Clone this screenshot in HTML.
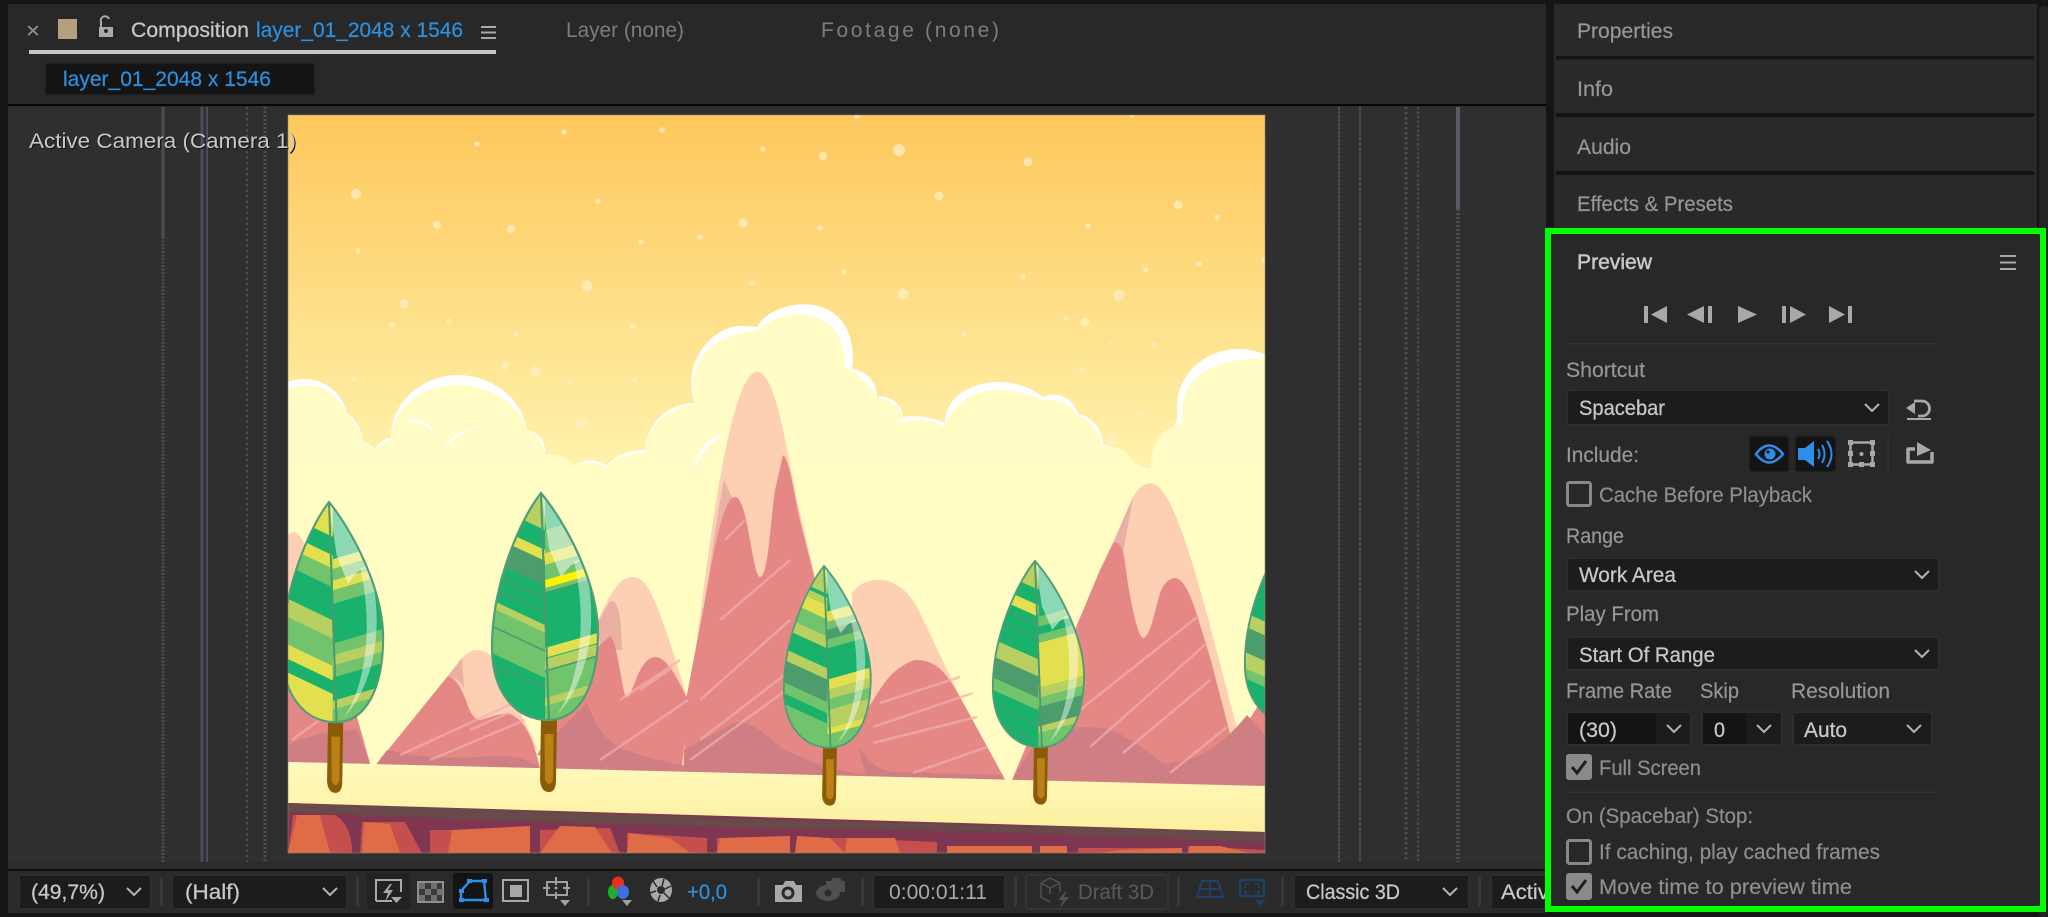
<!DOCTYPE html>
<html><head><meta charset="utf-8"><title>Composition</title>
<style>
html,body{margin:0;padding:0;background:#151515;width:2048px;height:917px;overflow:hidden}
svg{display:block}
text{font-family:"Liberation Sans",sans-serif;font-size:21px}
.g{fill:#969696;stroke:#969696;stroke-width:.2}.l{fill:#c8c8c8;stroke:#c8c8c8;stroke-width:.25}.b{fill:#2b90e0;stroke:#2b90e0;stroke-width:.2}.d{fill:#8e8e8e;stroke:#8e8e8e;stroke-width:.2}.f{fill:#5a5a5a}
.dd{fill:#1c1c1c;stroke:#2d2d2d;stroke-width:2}
.ch{fill:none;stroke:#b4b4b4;stroke-width:2}
.sep{fill:#373737}
.gd{stroke:#4d4c56;fill:none}
.tb{fill:#a8a8a8}
.cb{fill:none;stroke:#888;stroke-width:3}
.cf{fill:#8a8a8a}
.ck{fill:none;stroke:#1f1f1f;stroke-width:3}
.st{stroke:#f2aeac;stroke-width:2.5;fill:none}
.hl{stroke:#4a9a72;stroke-width:1.6;fill:none}
</style></head>
<body>
<svg width="2048" height="917" viewBox="0 0 2048 917" xmlns="http://www.w3.org/2000/svg">
<defs>
<linearGradient id="sky" x1="0" y1="115" x2="0" y2="470" gradientUnits="userSpaceOnUse"><stop offset="0" stop-color="#fdc75c"/><stop offset=".55" stop-color="#fedf88"/><stop offset="1" stop-color="#fff3ad"/></linearGradient>
<linearGradient id="gr" x1="0" y1="765" x2="0" y2="830" gradientUnits="userSpaceOnUse"><stop offset="0" stop-color="#fef9bc"/><stop offset="1" stop-color="#fdf09f"/></linearGradient>
<clipPath id="img"><rect x="288" y="115" width="977" height="738"/></clipPath>
<clipPath id="leaf"><path d="M0,0C-20,25-49,90-49,154C-49,200-25,227 7,227C40,227 57,190 57,140C57,90 25,30 0,0Z"/></clipPath>
<clipPath id="act"><rect x="1490" y="874" width="55" height="35"/></clipPath>
<g id="tr"><path d="M0,0H16L15,60Q15,72 8,72Q0,72-1,60Z" fill="#8a5c08"/><path d="M3.500,14H12.500L12,60Q8,68 4,60Z" fill="#bd8016"/></g>
<g id="hi"><path d="M0,0C15,15 30,40 41,68L30,72L20,84L8,55Z" fill="#fff" opacity=".5"/><path d="M33,68L42,66C56,110 55,180 16,222C38,190 47,130 33,68Z" fill="#fff" opacity=".45"/><path d="M0,0C-20,25-49,90-49,154C-49,200-25,227 7,227C40,227 57,190 57,140C57,90 25,30 0,0Z" fill="none" stroke="#4f9e78" stroke-width="2.2"/><path d="M0,0L8,227" stroke="#4a9a72" stroke-width="2.2"/></g>
</defs>

<!-- Frame -->
<rect width="2048" height="917" fill="#151515"/>
<rect x="8" y="4" width="1538" height="100" fill="#282828"/>
<rect x="8" y="104" width="1538" height="2" fill="#060606"/>
<rect x="8" y="106" width="1538" height="756" fill="#2f2f2f"/>
<rect x="8" y="862" width="1538" height="7" fill="#2c2c2c"/>
<rect x="8" y="869" width="1538" height="2" fill="#0e0e0e"/>
<rect x="8" y="871" width="1538" height="42" fill="#2a2a2a"/>

<!-- Tabs -->
<text x="26" y="38" class="d" textLength="14" lengthAdjust="spacingAndGlyphs" style="font-size:22px">×</text>
<rect x="58" y="19" width="19" height="20" fill="#b2a07e"/>
<path d="M99,27h14v10h-14z" fill="#aaa"/><path d="M101,27v-5a4,4 0 0 1 8,-3" fill="none" stroke="#aaa" stroke-width="2"/><circle cx="106" cy="31" r="2" fill="#282828"/>
<text x="131" y="37" class="l" textLength="118" lengthAdjust="spacingAndGlyphs">Composition</text>
<text x="256" y="37" class="b" textLength="207" lengthAdjust="spacingAndGlyphs">layer_01_2048 x 1546</text>
<path d="M481,27h15M481,32.5h15M481,38h15" stroke="#aaa" stroke-width="2"/>
<rect x="29" y="50" width="467" height="4" fill="#c5c5c5"/>
<text x="566" y="37" fill="#7c7c7c" textLength="118" lengthAdjust="spacingAndGlyphs">Layer (none)</text>
<text x="821" y="37" fill="#7c7c7c" textLength="178" lengthAdjust="spacing">Footage (none)</text>
<rect x="45.5" y="63" width="269" height="32" rx="2" fill="#141414" stroke="#222" stroke-width="1.5"/>
<text x="63" y="86" class="b" textLength="208" lengthAdjust="spacingAndGlyphs">layer_01_2048 x 1546</text>

<!-- Guides -->
<path class="gd" stroke-width="3" d="M163,107V237"/><path class="gd" stroke-width="3" stroke-dasharray="2 1.5" d="M163,237V862"/>
<path class="gd" stroke-width="3" d="M202,107V862"/><path class="gd" stroke-width="2" d="M207,107V862"/>
<path class="gd" stroke-width="2" stroke-dasharray="2.5 3" d="M247,107V862"/><path class="gd" stroke-width="3" stroke-dasharray="2 2" d="M265,107V862"/>
<path class="gd" stroke-width="2" stroke-dasharray="3 1" d="M1339,107V862"/><path class="gd" stroke-width="2" stroke-dasharray="4 1" d="M1360,107V862"/>
<path class="gd" stroke-width="3" stroke-dasharray="2.5 2.5" d="M1406,107V862"/><path class="gd" stroke-width="2" stroke-dasharray="2.5 2" d="M1418,107V862"/>
<path stroke="#5c5a65" stroke-width="4" d="M1458,107V209"/><path class="gd" stroke-width="4" stroke-dasharray="2 2" d="M1458,209V862"/>

<!-- Illustration -->
<g clip-path="url(#img)">
<rect x="288" y="115" width="977" height="738" fill="url(#sky)"/>
<g fill="#fff0c4" opacity=".75">
<circle cx="477" cy="144" r="2.8"/><circle cx="564" cy="132" r="2.8"/><circle cx="662" cy="130" r="2.8"/><circle cx="763" cy="149" r="2.8"/><circle cx="356" cy="194" r="5"/><circle cx="598" cy="201" r="2.8"/><circle cx="437" cy="225" r="4"/><circle cx="511" cy="229" r="4"/><circle cx="641" cy="242" r="2.8"/><circle cx="700" cy="237" r="2.8"/><circle cx="743" cy="223" r="4.5"/><circle cx="358" cy="251" r="2.8"/><circle cx="587" cy="286" r="5.5"/><circle cx="752" cy="283" r="2.8"/><circle cx="404" cy="304" r="5"/><circle cx="449" cy="321" r="2.8"/><circle cx="392" cy="325" r="2.8"/><circle cx="516" cy="334" r="2.8"/><circle cx="633" cy="326" r="2.8"/><circle cx="505" cy="366" r="4"/><circle cx="535" cy="371" r="5"/><circle cx="354" cy="379" r="2.8"/><circle cx="570" cy="382" r="2.8"/><circle cx="635" cy="380" r="2.8"/><circle cx="581" cy="423" r="5.5"/>
<circle cx="857" cy="116" r="2.8"/><circle cx="1132" cy="115" r="2.8"/><circle cx="823" cy="156" r="4"/><circle cx="899" cy="150" r="6"/><circle cx="1028" cy="162" r="4.5"/><circle cx="939" cy="196" r="4.5"/><circle cx="1178" cy="205" r="4.5"/><circle cx="1217" cy="217" r="2.8"/><circle cx="1088" cy="226" r="2.8"/><circle cx="820" cy="228" r="2.8"/><circle cx="844" cy="272" r="2.8"/><circle cx="1023" cy="277" r="2.8"/><circle cx="1146" cy="270" r="2.8"/><circle cx="1199" cy="264" r="2.8"/><circle cx="1264" cy="260" r="2.8"/><circle cx="903" cy="294" r="5.5"/><circle cx="1119" cy="295" r="5.5"/><circle cx="1066" cy="318" r="2.8"/><circle cx="1085" cy="322" r="4.5"/><circle cx="964" cy="334" r="2.8"/><circle cx="1111" cy="343" r="2"/><circle cx="1154" cy="345" r="2.8"/><circle cx="1082" cy="370" r="2.8"/><circle cx="1139" cy="415" r="2.8"/><circle cx="1112" cy="439" r="5.5"/>
</g>
<!-- clouds -->
<path fill="#fff" d="M288,382A44,44 0 0 1 347,413A40,40 0 0 1 363,440L375,449A25,25 0 0 1 391,437C391,400 425,375 457,375C492,375 522,398 527,430A22,22 0 0 1 545,455A32,32 0 0 1 573,467A20,14 0 0 1 606,466A50,50 0 0 1 645,450A50,50 0 0 1 695,403C680,360 715,326 740,326Q750,326 757,327C772,298 855,285 853,362L852,369A28,28 0 0 1 877,397A22,22 0 0 1 903,417Q925,414 945,423C945,395 975,382 997,382S1030,388 1043,397A25,25 0 0 1 1078,414A30,32 0 0 1 1103,445A38,30 0 0 1 1133,465Q1140,465 1150,470L1177,420V407C1177,370 1210,349 1237,349Q1255,349 1265,355V600H288Z"/>
<path fill="#fffcc6" d="M288,389Q325,375 347,413L345,415Q355,418 363,440L375,451Q383,440 391,440C393,405 425,385 457,385C490,385 520,405 527,430Q540,435 545,455Q565,452 573,467Q590,458 606,468Q620,453 645,453Q650,412 695,404C685,360 715,333 757,331C780,308 845,300 845,368L850,370Q865,378 877,398Q895,400 903,417L895,424Q925,415 945,427C950,405 975,390 997,390C1015,390 1030,395 1043,400Q1070,400 1078,416Q1095,420 1103,447Q1128,445 1133,463Q1142,465 1150,474Q1150,430 1182,424Q1175,360 1265,358V600H288Z"/>
<path fill="#fff" d="M404,422Q425,412 437,438Q425,420 404,422ZM443,452Q450,430 480,429Q455,432 443,452ZM693,470Q698,440 728,432Q705,445 693,470ZM780,365Q790,360 795,360Q785,362 780,365Z"/>
<rect x="288" y="470" width="977" height="320" fill="#fffcc4"/>
<!-- mountains -->
<path fill="#fdd0b4" d="M288,535Q297,525 306,548L322,620L300,700L288,700Z"/>
<path fill="#e58885" d="M288,680L345,700L357,717L370,763L288,762Z"/>
<path fill="#cf7f83" d="M288,745Q320,730 357,730L370,764L288,762Z"/>
<path fill="#fdd0b4" d="M447,677L462,658C470,648 490,640 505,680L538,750L447,720Z"/>
<path fill="#e9b0a3" d="M447,677L462,658L464,688C460,680 452,676 447,677Z"/>
<path fill="#e58885" d="M375,766L447,677C455,675 462,690 466,700C470,715 476,720 480,720C490,718 500,712 510,714C525,720 533,738 540,768Z"/>
<path fill="#cf7f83" d="M375,766L387,750Q430,760 480,757Q520,752 540,768Z"/>
<path fill="#fdd0b4" d="M590,640C610,590 620,577 633,577C650,577 660,610 688,700L688,770L600,770Z"/>
<path fill="#e9b0a3" d="M598,622L610,601C620,600 621,620 622,650L600,650Z"/>
<path fill="#e58885" d="M537,755L600,645L610,636C618,640 622,697 627,697C633,697 638,658 655,657C668,657 678,680 688,700L684,772Z"/>
<path fill="#cf7f83" d="M540,770L545,745L587,703Q600,740 625,750Q655,760 682,765L684,772Z"/>
<path fill="#fdd0b4" d="M852,593C865,575 900,570 920,613L952,680L980,740L872,772L850,700Z"/>
<path fill="#e58885" d="M840,775L860,720L872,702C880,690 890,668 915,660C935,660 945,670 960,697L1007,783Z"/>
<path fill="#cf7f83" d="M855,740Q870,770 895,772L1000,775L1007,783L860,780Z"/>
<path fill="#fdd0b4" d="M682,765C700,620 725,372 757,372C775,372 785,440 797,500L830,640L830,772Z"/>
<path fill="#e9b0a3" d="M686,720C700,650 715,520 724,480L732,497L700,700Z"/>
<path fill="#e58885" d="M684,768L686,700L710,573C716,540 725,497 735,497C748,497 752,575 760,577C768,577 770,525 775,490L783,455C790,460 795,500 800,520L830,640L866,776Z"/>
<path fill="#cf7f83" d="M684,774L684,750Q710,735 737,722Q755,722 780,747Q800,758 830,768L880,778Z"/>
<path fill="#fdd0b4" d="M1113,543L1133,497C1140,485 1150,478 1160,488C1175,505 1190,550 1213,637L1240,740L1200,770L1100,650Z"/>
<path fill="#e9b0a3" d="M1113,543L1133,497L1123,553Z"/>
<path fill="#e58885" d="M1012,780L1100,570L1113,543C1120,540 1124,550 1126,570C1130,600 1138,638 1143,638C1150,638 1155,610 1160,593C1165,580 1172,578 1176,578C1190,582 1198,620 1210,657L1233,745L1265,695V787Z"/>
<path fill="#cf7f83" d="M1012,780L1040,735Q1080,722 1113,730Q1140,745 1163,763Q1207,765 1247,715L1265,735V787Z"/>
<!-- streaks -->
<path class="st" opacity=".7" d="M400,755L520,700M430,760L525,720M470,730L510,712M292,740L340,705M600,760L688,700M620,700L680,660M640,690L672,668M700,700L790,620M720,620L790,560M690,760L800,680M725,540L745,520M700,740L830,640M880,703L960,677M873,727L973,693M873,743L977,717M913,773L987,747M1080,710L1197,617M1090,747L1207,643M1123,753L1210,680M1170,773L1227,727"/>
<!-- ground -->
<path fill="url(#gr)" d="M288,762L1265,786V832L288,803Z"/>
<path fill="#7f3650" d="M288,803L1265,832V853H288Z"/>
<path fill="#694a4a" d="M288,803L780,820L1265,832V842L1150,838L1000,832L780,828L540,822L288,812Z"/>
<g fill="#c44f4d"><path d="M293,815H335Q352,825 352,853H288Z"/><path d="M362,822H405L422,853H360Z"/><path d="M430,830H530V853H430Z"/><path d="M540,830L610,828L620,853H540Z"/><path d="M627,833L707,838V853H627Z"/><path d="M717,838L790,838V853H717Z"/><path d="M797,838L845,838V853H795Z"/><path d="M845,838L937,842V853H845Z"/><path d="M947,846L1032,846V853H947Z"/><path d="M1040,846H1067V853H1040Z"/><path d="M1078,848L1182,848V853H1078Z"/><path d="M1188,846L1265,850V853H1188Z"/></g>
<g fill="#e06b47"><path d="M297,815H320L330,853H288Z"/><path d="M364,822L390,824L400,853H362Z"/><path d="M452,830L530,826V853H448Z"/><path d="M560,826L595,827L612,853H540Z"/><path d="M629,833L670,838L690,853H627Z"/><path d="M720,838L790,836V853H717Z"/><path d="M797,836L830,838L845,853H795Z"/><path d="M847,838L895,838L900,853H845Z"/><path d="M947,846L1032,846V853H947Z"/><path d="M1040,846H1067V853H1040Z"/><path d="M1120,850L1182,848V853H1100Z"/><path d="M1190,846L1220,846L1250,853H1188Z"/></g>
<!-- trunks -->
<use href="#tr" transform="translate(328,723) scale(.95,.97)"/>
<use href="#tr" transform="translate(541,720)"/>
<use href="#tr" transform="translate(823,748) scale(.87,.8)"/>
<use href="#tr" transform="translate(1034,747) scale(.87,.8)"/>
<!-- Tree 1 -->
<g transform="translate(329,502) scale(.95,.97)"><g clip-path="url(#leaf)"><rect x="-60" y="-5" width="125" height="240" fill="#19b16b"/>
<path fill="#e3e04f" d="M-60,6L4,36V0H-60ZM-60,25L4,55V69L-60,39ZM-60,139L4,169V184L-60,154ZM-60,168L4,198V232H-60Z"/>
<path fill="#72c46c" d="M-60,39L4,69V88L-60,58ZM-60,111L4,141V169L-60,139ZM4,69L60,53V75L4,91ZM4,91L60,75V89L4,105ZM4,146L60,130V142L4,158ZM4,169L60,153V165L4,181ZM4,214L60,198V240H4Z"/>
<path fill="#b8cf62" d="M-60,92L4,122V141L-60,111ZM4,158L60,142V153L4,169ZM4,205L60,189V198L4,214Z"/>
<path fill="#e3e04f" d="M4,59L60,43V53L4,69ZM4,81L60,65V75L4,91Z"/></g><use href="#hi"/></g>
<!-- Tree 2 -->
<g transform="translate(541,493)"><g clip-path="url(#leaf)"><rect x="-60" y="-5" width="125" height="240" fill="#19b16b"/>
<path fill="#b8cf62" d="M-60,7L4,37V0H-60ZM-60,102L4,132V140L-60,110ZM4,166L60,150V162L4,178Z"/>
<path fill="#e3e04f" d="M-60,27L4,57V68L-60,38ZM4,155L60,139V149L4,165ZM4,60L60,44V56L4,72Z"/>
<path fill="#4d9c6c" d="M-60,38L4,68V93L-60,63Z"/>
<path fill="#72c46c" d="M-60,110L4,140V185L-60,155ZM4,37L60,21V44L4,60ZM4,72L60,56V84L4,100ZM4,178L60,162V240H4Z"/>
<path fill="#fff200" d="M4,87L60,71V79L4,95Z"/><path fill="#b8cf62" d="M4,205L60,189V197L4,213Z"/>
<path class="hl" d="M-60,75L4,105M-60,90L4,120M-60,165L4,195M-60,128L4,158M4,100L60,84M4,178L60,162"/></g><use href="#hi"/></g>
<!-- Tree 3 -->
<g transform="translate(824,566) scale(.82,.8)"><g clip-path="url(#leaf)"><rect x="-60" y="-5" width="125" height="240" fill="#19b16b"/>
<path fill="#b8cf62" d="M-60,5L4,35V0H-60ZM-60,10L4,40V49L-60,19ZM-60,58L4,88V103L-60,73ZM-60,98L4,128V142L-60,112ZM4,155L60,139V151L4,167ZM4,180L60,164V187L4,203Z"/>
<path fill="#e3e04f" d="M-60,19L4,49V67L-60,37ZM4,57L60,41V54L4,70ZM4,142L60,126V139L4,155ZM4,203L60,187V195L4,211Z"/>
<path fill="#72c46c" d="M-60,37L4,67V88L-60,58ZM-60,140L4,170V184L-60,154ZM-60,167L4,197V240H-60ZM4,70L60,54V64L4,80ZM4,92L60,76V87L4,103ZM4,167L60,151V164L4,180ZM4,211L60,195V240H4Z"/>
<path fill="#4d9c6c" d="M-60,112L4,142V170L-60,140ZM4,80L60,64V76L4,92Z"/></g><use href="#hi"/></g>
<!-- Tree 4 -->
<g transform="translate(1035,561) scale(.86,.82)"><g clip-path="url(#leaf)"><rect x="-60" y="-5" width="125" height="240" fill="#19b16b"/>
<path fill="#b8cf62" d="M-60,5L4,35V0H-60ZM-60,90L4,120V141L-60,111ZM4,155L60,139V151L4,167ZM4,200L60,184V194L4,210Z"/>
<path fill="#e3e04f" d="M-60,24L4,54V68L-60,38ZM4,100L60,84V129L4,145ZM4,145L60,129V139L4,155Z"/>
<path fill="#4d9c6c" d="M-60,111L4,141V167L-60,137ZM4,178L60,162V186L4,202Z"/>
<path fill="#72c46c" d="M-60,137L4,167V182L-60,152ZM4,68L60,52V64L4,80ZM4,90L60,74V84L4,100ZM4,167L60,151V162L4,178ZM4,210L60,194V240H4Z"/>
<path class="hl" d="M-60,48L4,78M-60,65L4,95M-60,170L4,200M-60,190L4,220"/></g><use href="#hi"/></g>
<!-- Tree 5 -->
<g transform="translate(1287,537) scale(.86,.82)"><g clip-path="url(#leaf)"><rect x="-60" y="-5" width="125" height="240" fill="#19b16b"/>
<path fill="#b8cf62" d="M-60,5L4,35V0H-60ZM-60,87L4,117V134L-60,104ZM-60,135L4,165V185L-60,155Z"/>
<path fill="#4d9c6c" d="M-60,104L4,134V165L-60,135Z"/><path fill="#72c46c" d="M-60,155L4,185V197L-60,167Z"/></g><use href="#hi"/></g>
</g>
<rect x="288" y="115" width="977" height="738" fill="none" stroke="#8f8a70" stroke-width="1" opacity=".6"/>
<text x="29" y="148" fill="#c9c9c9" textLength="267" lengthAdjust="spacingAndGlyphs" style="filter:drop-shadow(1px 1px 0 #111)">Active Camera (Camera 1)</text>

<!-- Bottom toolbar -->
<rect class="dd" x="19" y="875" width="132" height="34" rx="3"/>
<text x="31" y="899" class="l" textLength="74" lengthAdjust="spacingAndGlyphs">(49,7%)</text>
<path class="ch" d="M127,888L134,895L141,888"/>
<rect class="sep" x="160" y="877" width="3" height="29"/>
<rect class="dd" x="172" y="875" width="175" height="34" rx="3"/>
<text x="185" y="899" class="l" textLength="55" lengthAdjust="spacingAndGlyphs">(Half)</text>
<path class="ch" d="M323,888L330,895L337,888"/>
<rect class="sep" x="356" y="877" width="3" height="29"/>
<rect x="367" y="873" width="43" height="36" rx="3" fill="#222"/>
<path d="M376,901V880H401V892M376,901H392" fill="none" stroke="#a8a8a8" stroke-width="2"/>
<path d="M390,884L383,893H388L385,902L393,890H388L392,884Z" fill="#a8a8a8"/><path d="M391,897H402L396.500,903Z" fill="#a8a8a8"/>
<rect x="418" y="882" width="25" height="20" fill="#3a3a3a" stroke="#909090" stroke-width="2"/>
<path d="M419,883h6v6h-6zM431,883h6v6h-6zM425,889h6v6h-6zM437,889h6v6h-6zM419,895h6v6h-6zM431,895h6v6h-6z" fill="#707070"/>
<rect x="453" y="873" width="40" height="36" rx="3" fill="#141414"/>
<path d="M470,881H484L486,900H461V891Z" fill="none" stroke="#2f8fe8" stroke-width="2.4"/>
<path d="M467,879h5v4h-5zM482,879h5v4h-5zM459,889h5v4h-5zM459,898h5v4h-5zM484,898h5v4h-5z" fill="#2f8fe8"/>
<rect x="503" y="880" width="25" height="21" fill="none" stroke="#a8a8a8" stroke-width="2"/><rect x="510" y="885" width="12" height="12" fill="#a8a8a8"/>
<path d="M547,882H567V895H547ZM556,877V885M556,892V899M543,888H550M563,888H570" fill="none" stroke="#a0a0a0" stroke-width="2"/><circle cx="556" cy="888" r="1.500" fill="#a0a0a0"/><path d="M560,900H570L565,906Z" fill="#a0a0a0"/>
<rect class="sep" x="587" y="877" width="3" height="29"/>
<ellipse cx="613" cy="892" rx="5" ry="7" fill="#19b22a"/><ellipse cx="618" cy="883" rx="6" ry="6.500" fill="#e8301c"/><ellipse cx="623" cy="892" rx="6" ry="7" fill="#3d6de0"/><path d="M622,900H632L627,906Z" fill="#a0a0a0"/>
<ellipse cx="661" cy="890" rx="11" ry="12" fill="#a8a8a8"/><circle cx="661" cy="890" r="4" fill="#2a2a2a"/><path d="M664,879L662,886M671,886L665,889M669,898L664,893M658,901L660,895M650,893L656,891M653,881L657,887" stroke="#2a2a2a" stroke-width="1.500"/>
<text x="687" y="899" class="b" textLength="40" lengthAdjust="spacingAndGlyphs">+0,0</text>
<rect class="sep" x="757" y="877" width="3" height="29"/>
<path d="M775,885H783L785,881H794L796,885H802V902H775Z" fill="#a8a8a8"/><circle cx="788" cy="893" r="6.500" fill="#2a2a2a"/><circle cx="788" cy="893" r="3.500" fill="#a8a8a8"/>
<path d="M826,881H831L833,878H840L842,881H845V892H826Z" fill="#4f4f4f"/><ellipse cx="828" cy="893" rx="12" ry="8" fill="#4f4f4f"/><circle cx="828" cy="893" r="3.500" fill="#2a2a2a"/>
<rect class="sep" x="861" y="877" width="3" height="29"/>
<rect class="dd" x="873" y="875" width="132" height="34" rx="3"/>
<text x="889" y="899" fill="#a8a8a8" textLength="98" lengthAdjust="spacingAndGlyphs">0:00:01:11</text>
<rect class="sep" x="1014" y="877" width="3" height="29"/>
<rect x="1026" y="875" width="142" height="34" rx="3" fill="none" stroke="#343434" stroke-width="2"/>
<path d="M1041,883L1050,878L1060,883V892M1041,883V897L1050,902M1041,883L1050,888L1060,883M1050,888V894" fill="none" stroke="#505050" stroke-width="1.500"/><path d="M1067,890L1058,900H1063L1060,908L1069,897H1064Z" fill="#505050"/>
<text x="1078" y="899" class="f" textLength="76" lengthAdjust="spacingAndGlyphs">Draft 3D</text>
<rect class="sep" x="1177" y="877" width="3" height="29"/>
<path d="M1202,881H1218L1223,897H1197ZM1210,881V897M1199,889H1221" fill="none" stroke="#1f4166" stroke-width="2"/>
<rect x="1240" y="880" width="24" height="16" fill="none" stroke="#1f4166" stroke-width="2.500"/>
<path d="M1245,888V884H1249M1255,884H1259V888M1259,890V893H1255M1249,893H1245V890" fill="none" stroke="#1f4166" stroke-width="1.500"/><path d="M1255,900H1265L1260,906Z" fill="#1f4166"/>
<rect class="sep" x="1281" y="877" width="3" height="29"/>
<rect class="dd" x="1294" y="875" width="175" height="34" rx="3"/>
<text x="1306" y="899" class="l" textLength="94" lengthAdjust="spacingAndGlyphs">Classic 3D</text>
<path class="ch" d="M1443,888L1450,895L1457,888"/>
<rect class="sep" x="1478" y="877" width="3" height="29"/>
<g clip-path="url(#act)"><rect class="dd" x="1491" y="875" width="120" height="34" rx="3"/><text x="1501" y="899" class="l" textLength="60" lengthAdjust="spacingAndGlyphs">Active</text></g>

<!-- Right column -->
<rect x="2039" y="6" width="9" height="911" rx="3" fill="#242424"/>
<rect x="1554" y="4" width="483" height="224" fill="#292929"/>
<rect x="1556" y="56" width="478" height="3.500" fill="#141414"/>
<rect x="1556" y="113" width="478" height="4" fill="#141414"/>
<rect x="1556" y="171" width="478" height="4" fill="#141414"/>
<text x="1577" y="38" class="g" textLength="96" lengthAdjust="spacingAndGlyphs">Properties</text>
<text x="1577" y="96" class="g" textLength="36" lengthAdjust="spacingAndGlyphs">Info</text>
<text x="1577" y="154" class="g" textLength="54" lengthAdjust="spacingAndGlyphs">Audio</text>
<text x="1577" y="211" class="g" textLength="156" lengthAdjust="spacingAndGlyphs">Effects &amp; Presets</text>

<!-- Preview -->
<rect x="1548" y="231" width="495" height="678" fill="#282828" stroke="#00ff00" stroke-width="6"/>
<text x="1577" y="269" class="l" style="stroke-width:.5" textLength="75" lengthAdjust="spacingAndGlyphs">Preview</text>
<path d="M2000,256h16M2000,262.500h16M2000,269h16" stroke="#a8a8a8" stroke-width="2"/>
<g class="tb"><path d="M1644,306h4v17h-4zM1667,306V323L1651,314.500Z"/><path d="M1704,306V323L1687,314.500ZM1708,306h4v17h-4z"/><path d="M1738,306L1757,314.500L1738,323Z"/><path d="M1782,306h4v17h-4zM1790,306L1806,314.500L1790,323Z"/><path d="M1829,306L1845,314.500L1829,323ZM1848,306h4v17h-4z"/></g>
<rect x="1566" y="343" width="373" height="1.500" fill="#323232"/>
<text x="1566" y="377" class="g" textLength="79" lengthAdjust="spacingAndGlyphs">Shortcut</text>
<rect class="dd" x="1567" y="390" width="322" height="35" rx="3"/>
<text x="1579" y="415" class="l" textLength="86" lengthAdjust="spacingAndGlyphs">Spacebar</text>
<path class="ch" d="M1865,404L1872,411L1879,404"/>
<path d="M1914,401H1922A7.500,7.500 0 0 1 1922,416H1918" fill="none" stroke="#a8a8a8" stroke-width="2.800"/><path d="M1906,408L1915,402V414Z" fill="#a8a8a8"/><path d="M1907,419H1931" stroke="#a8a8a8" stroke-width="2"/>
<text x="1566" y="462" class="g" textLength="73" lengthAdjust="spacingAndGlyphs">Include:</text>
<rect x="1749" y="436" width="40" height="36" rx="3" fill="#141414" stroke="#262626"/>
<rect x="1795" y="436" width="41" height="36" rx="3" fill="#141414" stroke="#262626"/>
<path d="M1756,454Q1769,437 1783,454Q1769,471 1756,454Z" fill="none" stroke="#2f8fe8" stroke-width="2.500"/><circle cx="1770" cy="454" r="5.500" fill="#2f8fe8"/><circle cx="1768" cy="452" r="1.600" fill="#141414"/>
<path d="M1798,448H1805L1814,441V467L1805,460H1798Z" fill="#2f8fe8"/>
<path d="M1818,449Q1821,454 1818,459M1822,445Q1827,454 1822,463M1827,441Q1836,454 1827,467" fill="none" stroke="#2f8fe8" stroke-width="2"/>
<rect x="1850.500" y="442.500" width="22" height="22" fill="none" stroke="#a8a8a8" stroke-width="2.500"/>
<path d="M1848,440h5v5h-5zM1870,440h5v5h-5zM1848,462h5v5h-5zM1870,462h5v5h-5zM1859,462h5v5h-5zM1848,451h5v5h-5zM1870,451h5v5h-5z" fill="#a8a8a8"/><circle cx="1861.500" cy="454" r="2" fill="#a8a8a8"/>
<rect x="1887.500" y="435" width="1.500" height="37" fill="#323232"/>
<path d="M1915,449H1908V462H1932V452" fill="none" stroke="#a8a8a8" stroke-width="3.500" stroke-linejoin="round"/><path d="M1917,442L1931,450L1917,456Z" fill="#a8a8a8"/>
<rect class="cb" x="1567.500" y="482.500" width="23" height="23" rx="2"/>
<text x="1599" y="502" class="d" textLength="213" lengthAdjust="spacingAndGlyphs">Cache Before Playback</text>
<text x="1566" y="543" class="g" textLength="58" lengthAdjust="spacingAndGlyphs">Range</text>
<rect class="dd" x="1567" y="558" width="372" height="33" rx="3"/>
<text x="1579" y="582" class="l" textLength="97" lengthAdjust="spacingAndGlyphs">Work Area</text>
<path class="ch" d="M1915,571L1922,578L1929,571"/>
<text x="1566" y="621" class="g" textLength="93" lengthAdjust="spacingAndGlyphs">Play From</text>
<rect class="dd" x="1567" y="637" width="372" height="33" rx="3"/>
<text x="1579" y="662" class="l" textLength="136" lengthAdjust="spacingAndGlyphs">Start Of Range</text>
<path class="ch" d="M1915,650L1922,657L1929,650"/>
<text x="1566" y="698" class="g" textLength="106" lengthAdjust="spacingAndGlyphs">Frame Rate</text>
<text x="1700" y="698" class="g" textLength="39" lengthAdjust="spacingAndGlyphs">Skip</text>
<text x="1791" y="698" class="g" textLength="99" lengthAdjust="spacingAndGlyphs">Resolution</text>
<rect class="dd" x="1567" y="712" width="124" height="33" rx="3"/><path d="M1568,713H1656V744H1568Z" fill="#141414"/>
<text x="1579" y="737" class="l" textLength="38" lengthAdjust="spacingAndGlyphs">(30)</text>
<path class="ch" d="M1667,725L1674,732L1681,725"/>
<rect class="dd" x="1702" y="712" width="80" height="33" rx="3"/><path d="M1703,713H1746V744H1703Z" fill="#141414"/>
<text x="1714" y="737" class="l" textLength="11" lengthAdjust="spacingAndGlyphs">0</text>
<path class="ch" d="M1757,725L1764,732L1771,725"/>
<rect class="dd" x="1793" y="712" width="139" height="33" rx="3"/>
<text x="1804" y="737" class="l" textLength="43" lengthAdjust="spacingAndGlyphs">Auto</text>
<path class="ch" d="M1907,725L1914,732L1921,725"/>
<rect class="cf" x="1566" y="754" width="26" height="26" rx="3"/><path class="ck" d="M1572,767L1577,773L1586,761"/>
<text x="1599" y="775" class="d" textLength="102" lengthAdjust="spacingAndGlyphs">Full Screen</text>
<rect x="1566" y="791.500" width="373" height="1.500" fill="#323232"/>
<text x="1566" y="823" class="d" textLength="187" lengthAdjust="spacingAndGlyphs">On (Spacebar) Stop:</text>
<rect class="cb" x="1567.500" y="840.500" width="23" height="23" rx="2"/>
<text x="1599" y="859" class="d" textLength="281" lengthAdjust="spacingAndGlyphs">If caching, play cached frames</text>
<rect class="cf" x="1566" y="873" width="26" height="27" rx="3"/><path class="ck" d="M1572,886L1577,892L1586,880"/>
<text x="1599" y="894" class="d" textLength="253" lengthAdjust="spacingAndGlyphs">Move time to preview time</text>
</svg>
</body></html>
